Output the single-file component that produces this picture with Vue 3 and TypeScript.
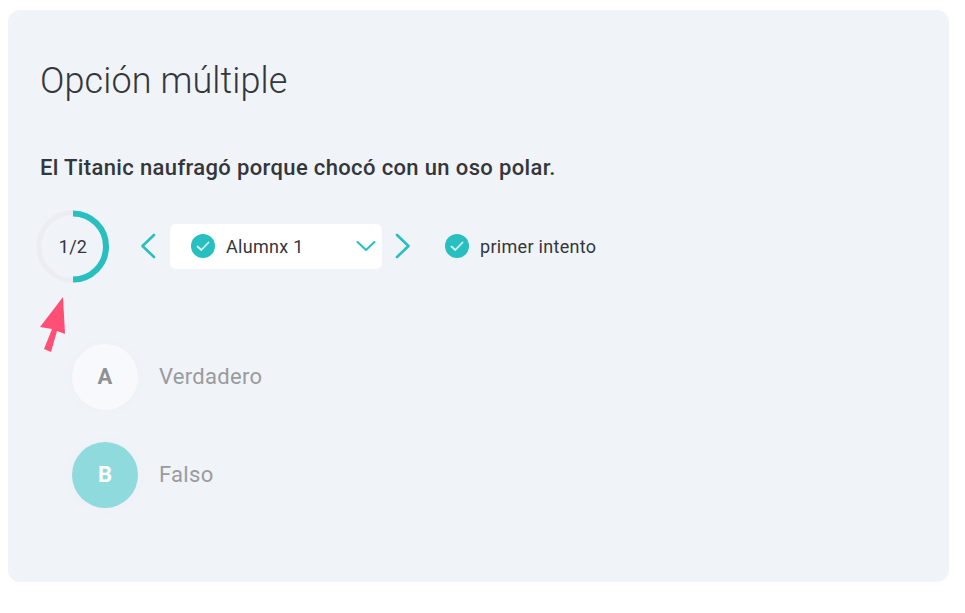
<script setup lang="ts">
const options = [
  { letter: 'A', text: 'Verdadero', selected: false },
  { letter: 'B', text: 'Falso', selected: true },
]
</script>

<template>
  <div class="page">
    <section class="card">
      <h1 class="title">Opción múltiple</h1>
      <p class="question">El Titanic naufragó porque chocó con un oso polar.</p>
      <div class="toolbar">
        <div class="ring">
          <svg width="72" height="72" viewBox="0 0 72 72">
            <circle cx="36" cy="36.500" r="34" fill="none" stroke="#ecedf2" stroke-width="5" />
            <path d="M36 3.500A33 33 0 0 1 36 69.500" fill="none" stroke="#27bfc0" stroke-width="6" />
          </svg>
          <span class="ring-label">1/2</span>
        </div>
        <svg class="nav prev" width="16" height="26" viewBox="0 0 16 26">
          <path d="M14 2L2.500 13L14 24" />
        </svg>
        <div class="select">
          <svg class="check" width="24" height="24" viewBox="0 0 24 24">
            <circle cx="12" cy="12" r="12" fill="#27bfc0" />
            <path d="M6.500 12.500L10.300 16L17.500 8.500" fill="none" stroke="#d8f5f5" stroke-width="1.800" stroke-linecap="round" stroke-linejoin="round" />
          </svg>
          <span class="student">Alumnx 1</span>
          <svg class="caret" width="20" height="12" viewBox="0 0 20 12">
            <path d="M1.500 2L10 10L18.500 2" />
          </svg>
        </div>
        <svg class="nav next" width="16" height="26" viewBox="0 0 16 26">
          <path d="M2 2L13.500 13L2 24" />
        </svg>
        <div class="attempt">
          <svg class="check" width="24" height="24" viewBox="0 0 24 24">
            <circle cx="12" cy="12" r="12" fill="#27bfc0" />
            <path d="M6.500 12.500L10.300 16L17.500 8.500" fill="none" stroke="#d8f5f5" stroke-width="1.800" stroke-linecap="round" stroke-linejoin="round" />
          </svg>
          <span>primer intento</span>
        </div>
      </div>
      <ul class="options">
        <li v-for="o in options" :key="o.letter" class="option">
          <span class="bubble" :class="{ selected: o.selected }">{{ o.letter }}</span>
          <span class="option-text">{{ o.text }}</span>
        </li>
      </ul>
      <svg class="pointer" width="30" height="58" viewBox="0 0 30 58">
        <polygon points="25,0 27,37 19,34 13,55 6,52 14,32 2,30" fill="#ff4f75" />
      </svg>
    </section>
  </div>
</template>

<style scoped>
.page {
  width: 965px;
  height: 613px;
  padding: 10px 16px 31px 8px;
  box-sizing: border-box;
  font-family: Roboto, "Liberation Sans", sans-serif;
}
.card {
  position: relative;
  height: 572px;
  box-sizing: border-box;
  padding: 50px 32px 0;
  background: #f0f3f8;
  border-radius: 12px;
}
.title {
  margin: 0;
  font-size: 36px;
  line-height: 42px;
  font-weight: 300;
  letter-spacing: 0.1px;
  color: #33363b;
}
.question {
  margin: 52px 0 0;
  font-size: 22px;
  line-height: 28px;
  font-weight: 500;
  letter-spacing: 0.36px;
  color: #33363b;
}
.toolbar {
  display: flex;
  align-items: center;
  margin: 27px 0 0 -3px;
  height: 74px;
  color: #33363b;
  letter-spacing: 0.3px;
}
.ring {
  position: relative;
  width: 72px;
  height: 72px;
  flex: none;
}
.ring svg {
  display: block;
  overflow: visible;
}
.ring-label {
  position: absolute;
  inset: 0;
  display: flex;
  align-items: center;
  justify-content: center;
  font-size: 18px;
}
.nav path,
.caret path {
  fill: none;
  stroke: #27bfc0;
  stroke-linecap: round;
  stroke-linejoin: round;
}
.nav path {
  stroke-width: 2.600;
}
.caret path {
  stroke-width: 2;
}
.nav {
  flex: none;
}
.prev {
  margin-left: 31px;
  margin-right: 14px;
}
.next {
  margin-left: 13px;
}
.select {
  display: flex;
  align-items: center;
  width: 212px;
  height: 45px;
  box-sizing: border-box;
  padding: 0 6px 0 21px;
  background: #fff;
  border-radius: 6px;
}
.check {
  flex: none;
}
.student {
  margin-left: 11px;
  flex: 1;
  font-size: 18px;
}
.attempt {
  display: flex;
  align-items: center;
  gap: 11px;
  margin-left: 34px;
  font-size: 18px;
}
.options {
  list-style: none;
  margin: 61px 0 0 32px;
  padding: 0;
  display: flex;
  flex-direction: column;
  gap: 32px;
}
.option {
  display: flex;
  align-items: center;
  gap: 21px;
}
.bubble {
  width: 66px;
  height: 66px;
  box-sizing: border-box;
  padding-bottom: 2px;
  border-radius: 50%;
  display: flex;
  align-items: center;
  justify-content: center;
  background: #f8f9fd;
  color: #8f9193;
  font-size: 22px;
  font-weight: 700;
  box-shadow: 0 0 12px rgba(120, 130, 150, 0.03);
}
.bubble.selected {
  background: #8edadc;
  color: #fff;
}
.option-text {
  padding-bottom: 2px;
  font-size: 22px;
  letter-spacing: 0.3px;
  color: #9a9b9e;
}
.pointer {
  position: absolute;
  left: 30px;
  top: 287px;
}
</style>
